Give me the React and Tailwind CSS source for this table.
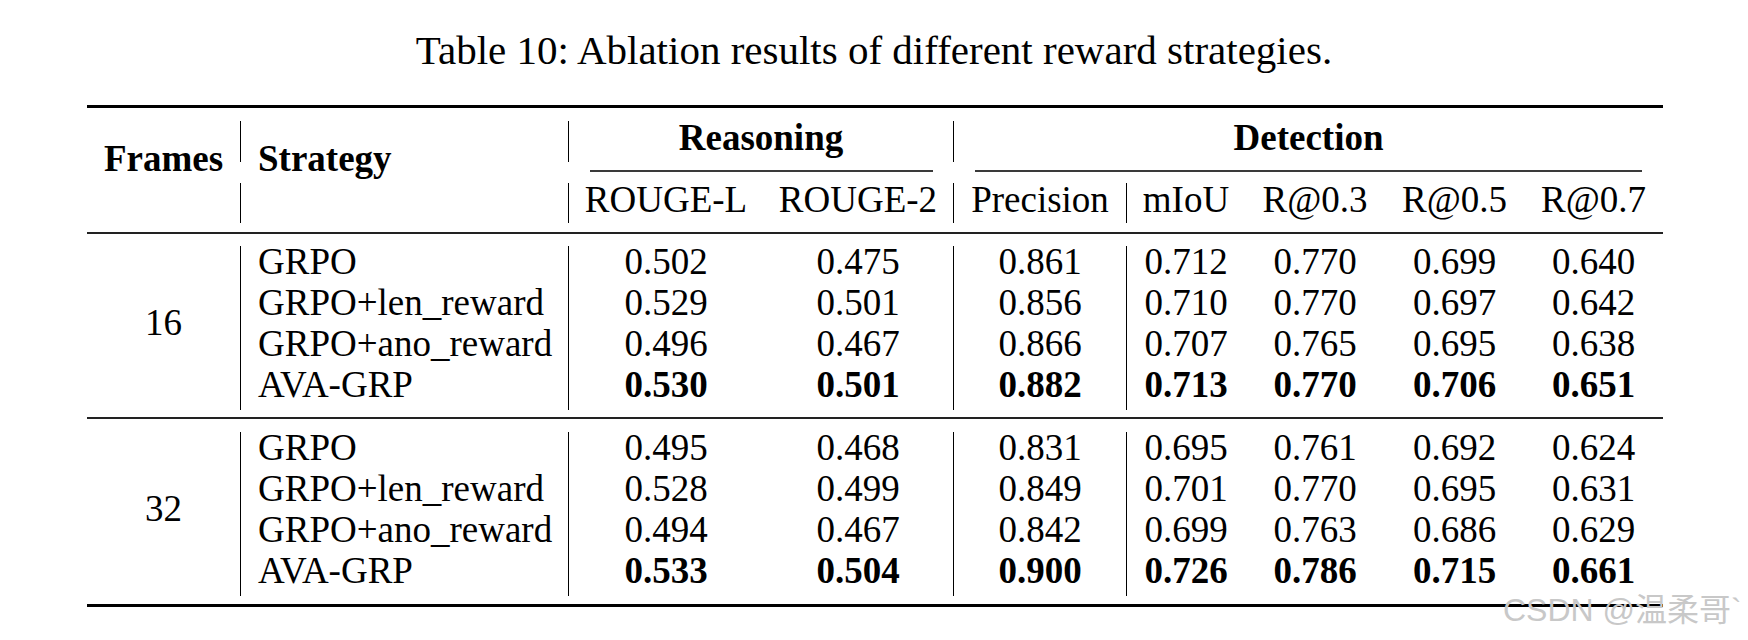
import React from "react";

const grid = "grid grid-cols-[153px_328px_195px_190px_173px_119px_140px_139px_139px]";

// columns that carry a vertical bar on their left edge (after Strategy)
const numBar = ["border-l border-black", "", "border-l border-black", "border-l border-black", "", "", ""];

const groups = [
  {
    frames: "16",
    rows: [
      ["GRPO", "0.502", "0.475", "0.861", "0.712", "0.770", "0.699", "0.640"],
      ["GRPO+len_reward", "0.529", "0.501", "0.856", "0.710", "0.770", "0.697", "0.642"],
      ["GRPO+ano_reward", "0.496", "0.467", "0.866", "0.707", "0.765", "0.695", "0.638"],
      ["AVA-GRP", "0.530", "0.501", "0.882", "0.713", "0.770", "0.706", "0.651"],
    ],
  },
  {
    frames: "32",
    rows: [
      ["GRPO", "0.495", "0.468", "0.831", "0.695", "0.761", "0.692", "0.624"],
      ["GRPO+len_reward", "0.528", "0.499", "0.849", "0.701", "0.770", "0.695", "0.631"],
      ["GRPO+ano_reward", "0.494", "0.467", "0.842", "0.699", "0.763", "0.686", "0.629"],
      ["AVA-GRP", "0.533", "0.504", "0.900", "0.726", "0.786", "0.715", "0.661"],
    ],
  },
];

function Group({ frames, rows }) {
  return (
    <div className={`${grid} auto-rows-[41px]`}>
      <div className="row-span-4 pt-[61px] text-center leading-[32px]">{frames}</div>
      {rows.map((r, i) => {
        const best = i === rows.length - 1;
        return (
          <React.Fragment key={i}>
            <div className="border-l border-black pl-[17px] leading-[32px]">{r[0]}</div>
            {r.slice(1).map((v, j) => (
              <div
                key={j}
                className={`${numBar[j]} text-center leading-[32px] ${best ? "font-bold" : ""}`}
              >
                {v}
              </div>
            ))}
          </React.Fragment>
        );
      })}
    </div>
  );
}

export default function App() {
  return (
    <div className="relative w-[1748px] h-[640px] overflow-hidden bg-white text-black font-['Liberation_Serif','Times_New_Roman',serif]">
      <div className="pt-[30px] text-center text-[41px] leading-[40px]">
        Table 10: Ablation results of different reward strategies.
      </div>

      <div className="ml-[87px] w-[1576px] text-[37px]">
        <div className="mt-[35px] h-[3px] bg-black" />

        {/* header row 1 */}
        <div className={`${grid} mt-[13px] h-[41px] grid-rows-[41px]`}>
          <div className="h-[41px] pt-[21px] text-center font-bold leading-[33px]">Frames</div>
          <div className="h-[41px] border-l border-black pl-[17px] pt-[21px] font-bold leading-[33px]">
            Strategy
          </div>
          <div className="col-span-2 border-l border-black text-center font-bold leading-[33px]">
            Reasoning
          </div>
          <div className="col-span-5 border-l border-black text-center font-bold leading-[33px]">
            Detection
          </div>
        </div>

        {/* cmidrules */}
        <div className={`${grid} h-[21px]`}>
          <div className="col-span-2" />
          <div className="col-span-2 pl-[22px] pr-[20px] pt-[8px]">
            <div className="h-[2px] bg-[#3a3a3a]" />
          </div>
          <div className="col-span-5 pl-[22px] pr-[21px] pt-[8px]">
            <div className="h-[2px] bg-[#3a3a3a]" />
          </div>
        </div>

        {/* header row 2 */}
        <div className={`${grid} h-[40px] leading-[33px]`}>
          <div />
          <div className="border-l border-black" />
          <div className="border-l border-black text-center">ROUGE-L</div>
          <div className="text-center">ROUGE-2</div>
          <div className="border-l border-black text-center">Precision</div>
          <div className="border-l border-black text-center">mIoU</div>
          <div className="text-center">R@0.3</div>
          <div className="text-center">R@0.5</div>
          <div className="text-center">R@0.7</div>
        </div>

        <div className="mt-[9px] h-[2px] bg-[#222]" />

        <div className="mt-[12px]">
          <Group {...groups[0]} />
        </div>

        <div className="mt-[7px] h-[2px] bg-[#222]" />

        <div className="mt-[13px]">
          <Group {...groups[1]} />
        </div>

        <div className="mt-[8px] h-[3px] bg-black" />
      </div>

      <div className="absolute left-[1503px] top-[594px] whitespace-nowrap text-[32px] leading-[32px] text-[#c8c8c8] font-['Liberation_Sans','Noto_Sans_CJK_SC',sans-serif]">
        CSDN @温柔哥`
      </div>
    </div>
  );
}
